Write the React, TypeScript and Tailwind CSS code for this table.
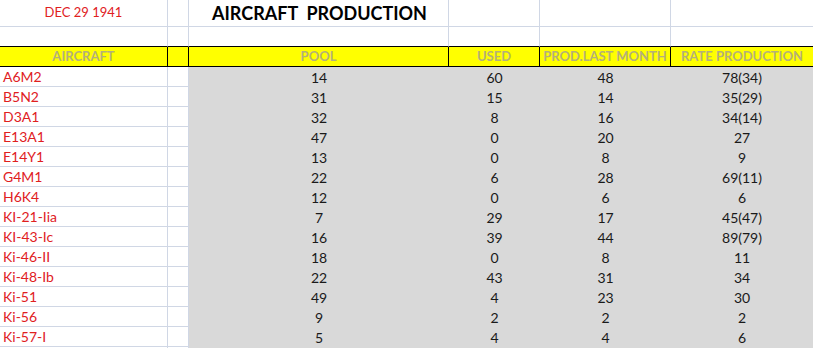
const rows: [string, string, string, string, string][] = [
  ['A6M2', '14', '60', '48', '78(34)'],
  ['B5N2', '31', '15', '14', '35(29)'],
  ['D3A1', '32', '8', '16', '34(14)'],
  ['E13A1', '47', '0', '20', '27'],
  ['E14Y1', '13', '0', '8', '9'],
  ['G4M1', '22', '6', '28', '69(11)'],
  ['H6K4', '12', '0', '6', '6'],
  ['KI-21-Iia', '7', '29', '17', '45(47)'],
  ['KI-43-Ic', '16', '39', '44', '89(79)'],
  ['Ki-46-II', '18', '0', '8', '11'],
  ['Ki-48-Ib', '22', '43', '31', '34'],
  ['Ki-51', '49', '4', '23', '30'],
  ['Ki-56', '9', '2', '2', '2'],
  ['Ki-57-I', '5', '4', '4', '6'],
];

const headers = ['AIRCRAFT', '', 'POOL', 'USED', 'PROD.LAST MONTH', 'RATE PRODUCTION'];

export default function App() {
  return (
    <div
      className="w-[813px] h-[348px] overflow-hidden bg-white text-[14px] text-[#1a1a1a]"
      style={{ fontFamily: 'Lato, "Open Sans", sans-serif' }}
    >
      <div className="grid grid-cols-[168px_21px_260px_91px_131px_142px]">
        {/* Row 1: date + title */}
        <div className="h-[27px] border-r border-b border-[#d0d7e5] flex items-center justify-center text-[13px] text-[#e0201e]">
          DEC 29 1941
        </div>
        <div className="h-[27px] border-r border-b border-[#d0d7e5]" />
        <div className="h-[27px] border-r border-b border-[#d0d7e5] flex items-center pl-[23px]">
          <span className="text-[18px] font-bold text-black whitespace-pre leading-none">AIRCRAFT  PRODUCTION</span>
        </div>
        <div className="h-[27px] border-r border-b border-[#d0d7e5]" />
        <div className="h-[27px] border-r border-b border-[#d0d7e5]" />
        <div className="h-[27px] border-b border-[#d0d7e5]" />

        {/* Row 2: empty, black bottom line */}
        {[0, 1, 2, 3, 4, 5].map((i) => (
          <div
            key={i}
            className={`h-[20px] border-b border-b-black ${i < 5 ? 'border-r border-r-[#d0d7e5]' : ''}`}
          />
        ))}

        {/* Header row */}
        {headers.map((h, i) => (
          <div
            key={i}
            className={`h-[20px] bg-[#ffff00] border-b border-black flex items-center justify-center font-bold text-[13px] text-[#b4b07a] ${i < 5 ? 'border-r' : ''}`}
          >
            {h}
          </div>
        ))}

        {/* Data rows */}
        {rows.map((r) => (
          <Row key={r[0]} r={r} />
        ))}
        <Row r={['', '', '', '', '']} />
      </div>
    </div>
  );
}

function Row({ r }: { r: [string, string, string, string, string] }) {
  return (
    <>
      <div className="h-[20px] border-r border-b border-[#d0d7e5] flex items-center pl-[3px] text-[#e0201e]">
        {r[0]}
      </div>
      <div className="h-[20px] border-r border-b border-[#d0d7e5]" />
      <div className="h-[20px] bg-[#d9d9d9] flex items-center justify-center">{r[1]}</div>
      <div className="h-[20px] bg-[#d9d9d9] flex items-center justify-center">{r[2]}</div>
      <div className="h-[20px] bg-[#d9d9d9] flex items-center justify-center">{r[3]}</div>
      <div className="h-[20px] bg-[#d9d9d9] flex items-center justify-center">{r[4]}</div>
    </>
  );
}
